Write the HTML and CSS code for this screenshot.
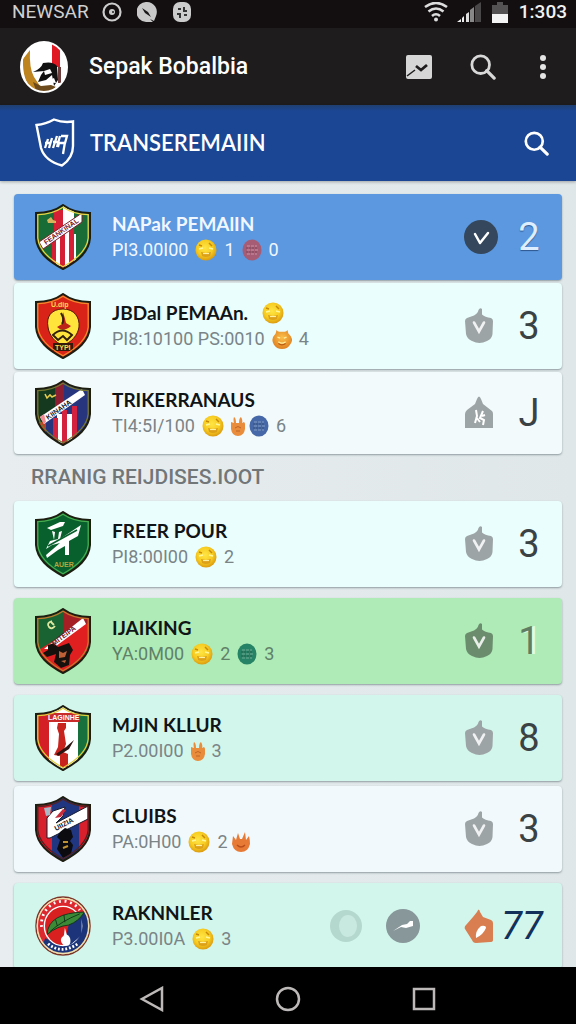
FILE: index.html
```html
<!DOCTYPE html>
<html lang="id">
<head>
<meta charset="utf-8">
<meta name="viewport" content="width=device-width, initial-scale=1">
<title>Sepak Bobalbia</title>
<link rel="stylesheet" href="styles.css">
</head>
<body>
<svg class="sprite" aria-hidden="true">
  <defs>
    <clipPath id="shield-clip"><path d="M28 1C20 7 10 9 1 9V34C2 48 13 57 28 65C43 57 54 48 55 34V9C46 9 36 7 28 1Z"/></clipPath>
    <radialGradient id="gold" cx="45%" cy="40%" r="60%"><stop offset="0" stop-color="#ffe544"/><stop offset=".6" stop-color="#f7cd22"/><stop offset="1" stop-color="#dc9c10"/></radialGradient>
    <radialGradient id="amber" cx="50%" cy="40%" r="60%"><stop offset="0" stop-color="#fbc04a"/><stop offset="1" stop-color="#e08122"/></radialGradient>
  </defs>
  <symbol id="shield-rim" viewBox="0 0 56 66">
    <path d="M28 1C20 7 10 9 1 9V34C2 48 13 57 28 65C43 57 54 48 55 34V9C46 9 36 7 28 1Z" fill="none" stroke="#1d1d10" stroke-width="2"/>
    <path d="M28 3.200C20 8.500 11 10.500 2.800 10.600V34C4 46.500 14 55 28 62.800C42 55 52 46.500 53.200 34V10.600C45 10.500 36 8.500 28 3.200Z" fill="none" stroke="currentColor" stroke-width="1.300"/>
  </symbol>
  <symbol id="smile" viewBox="0 0 22 22">
    <circle cx="11" cy="11" r="10.500" fill="url(#gold)"/>
    <path d="M4 6l3 1M14 4l3 3" stroke="#c98a0a" stroke-width="1.500"/>
    <path d="M4 10l4-1M14 9l4 1" stroke="#fff79b" stroke-width="1.500" fill="none"/>
    <path d="M6 13l5 1 5-1-1 4q-4 2-8 0Z" fill="#dda019"/><path d="M8 14.500h6" stroke="#fff0a0" stroke-width="1.200"/>
  </symbol>
  <symbol id="imp" viewBox="0 0 22 22">
    <path d="M5 1q1 2 3 2h6q2 0 3-2l1 4q7 6 2 12-3 5-9 5t-9-5Q-2 11 4 5Z" fill="url(#amber)"/>
    <path d="M6 9l3 1M13 10l3-1M7 14q4 3 8 0" stroke="#fff0a0" stroke-width="1.500" fill="none"/>
    <path d="M7 16q4 3 8 0" stroke="#b85c15" stroke-width="1.200" fill="none"/>
  </symbol>
  <symbol id="hand" viewBox="0 0 14 20">
    <path d="M3 1q2 1 2 6h3Q8 2 10 1q2 3 1 6l2-1q2 2 1 7-1 7-7 7T0 13V6l3 1Q2 3 3 1Z" fill="#e98d3c"/>
    <path d="M4 12q3-3 6 0M5 15h4" stroke="#bd6425" stroke-width="1" fill="none"/>
  </symbol>
  <symbol id="flame" viewBox="0 0 18 20">
    <path d="M1 4l3 4 2-7 2 6h2l3-7 1 8 3-4q1 4 1 8-2 8-9 8T0 12Z" fill="#e77b35"/>
    <path d="M5 13q4 4 8 0" stroke="#b94e1b" stroke-width="1.500" fill="none"/>
  </symbol>
  <symbol id="coin" viewBox="0 0 20 22">
    <ellipse cx="10" cy="11" rx="9.500" ry="10.500" fill="currentColor"/>
    <path d="M5 7h10M5 11h11M5 15h10" stroke="#fff" stroke-opacity=".35" stroke-width="1.200" stroke-dasharray="3 1"/>
    <path d="M4 9h12M4 13h12" stroke="#222" stroke-opacity=".35" stroke-width="1.200" stroke-dasharray="2 1"/>
  </symbol>
  <symbol id="pouch" viewBox="0 0 30 36">
    <path d="M1 13Q1 11 3 10L10 7.500Q14 5 14.500 2 16-1 18 1V6.500Q21 9 27 10 29 11 29 13L28.500 26Q28 31 23 33 19 35 15.500 35 12 35 8 33 3 31 2 26Z" fill="currentColor"/>
    <path d="M10 14.500l5 9 5-9" fill="none" stroke="#fff" stroke-opacity=".85" stroke-width="2.600" stroke-linecap="round"/>
  </symbol>
  <symbol id="lens" viewBox="0 0 28 28">
    <circle cx="11.500" cy="11.500" r="9.500" fill="none" stroke="currentColor" stroke-width="3"/>
    <path d="M18 18l8 8" stroke="currentColor" stroke-width="3.500" stroke-linecap="round"/>
  </symbol>
</svg>

<div class="screen">
  <div class="status">
    <span class="carrier">NEWSAR</span>
    <svg class="status-icon" viewBox="0 0 20 20"><circle cx="10" cy="10" r="8.500" fill="none" stroke="#ccc" stroke-width="2.200"/><circle cx="10" cy="10" r="3" fill="#ccc"/><circle cx="11" cy="10" r="1" fill="#222"/></svg>
    <svg class="status-icon" viewBox="0 0 20 20"><path d="M10 0a10 10 0 0 1 9 14l-2 5-4-2 3 3H9A10 10 0 0 1 10 0Z" fill="#c9c9c9"/><path d="M5 6l6 4 3 5-6-4Z" fill="#1a1718"/></svg>
    <svg class="status-icon" viewBox="0 0 20 20"><rect x="1" width="18" height="20" rx="7" fill="#ccc"/><path d="M6 7h3M12 5v4h3M5 12h3v4M12 13h3" stroke="#333" stroke-width="2" fill="none"/></svg>
    <svg class="wifi" viewBox="0 0 24 20"><g fill="none" stroke="#ddd" stroke-width="2.600"><path d="M1 5q11-8 22 0M4.500 9.500q7.500-6 15 0M8 14q4-3.500 8 0"/></g><circle cx="12" cy="17.500" r="2" fill="#ddd"/></svg>
    <svg class="signal" viewBox="0 0 24 20"><path d="M0 20l4-3v3ZM5 16l2-2v6H5Z" fill="#eee"/><path d="M9 12l3-2v10H9Z" fill="#ddd"/><path d="M13 8l4-3v15h-4Z" fill="#888"/><path d="M18 4l6-4v20h-6Z" fill="#4a4748"/></svg>
    <svg class="battery" viewBox="0 0 16 21"><path d="M0 3h5V0h6v3h5v10H0Z" fill="#555253"/><path d="M0 12h16v9H0Z" fill="#f4f4f4"/></svg>
    <span class="clock">1:303</span>
  </div>

  <header class="appbar">
    <svg class="avatar" viewBox="0 0 48 52">
      <defs><clipPath id="avatar-clip"><ellipse cx="24" cy="26" rx="23" ry="25"/></clipPath></defs>
      <g clip-path="url(#avatar-clip)"><path fill="#fff" d="M0 0h48v52H0z"/><path d="M3 18L10 9q-1 18 4 27l8 12-8 3Q2 40 3 18Z" fill="#bd8420"/><path d="M32 0h8v26h-8z" fill="#df1824"/><path d="M38 26h3v16h-3z" fill="#6b3d3c"/><path d="M13 31q8-3 10-9 10-2 14 3l1 14-4 6-2-11-6 5-8 2 3-7 3-4Z" fill="#111"/><path d="M13 41l8 4 10-1 5 2-8 6-12-3Z" fill="#6d4a1b"/><path d="M24 30l6-2 2 4-7 2ZM25 41l9-4 2 5Z" fill="#fff"/></g>
      <ellipse cx="24" cy="26" rx="23" ry="25" fill="none" stroke="#fff" stroke-width="2"/>
    </svg>
    <h1 class="app-title">Sepak Bobalbia</h1>
    <button class="bar-button" aria-label="Statistik"><svg class="icon-chart" viewBox="0 0 26 24"><rect width="26" height="24" rx="2" fill="#d6d6d6"/><path d="M1 21l8-6" stroke="#1e1c1c" stroke-width="1.500"/><path d="M10 11l5 4 6-5" fill="none" stroke="#1e1c1c" stroke-width="2.800"/></svg></button>
    <button class="bar-button light" aria-label="Cari"><svg class="icon-lens"><use href="#lens"/></svg></button>
    <button class="bar-button more" aria-label="Menu"><svg class="icon-more" viewBox="0 0 8 26"><g fill="#e4e4e4"><circle cx="4" cy="4" r="3"/><circle cx="4" cy="13" r="3"/><circle cx="4" cy="22" r="3"/></g></svg></button>
  </header>

  <div class="subbar">
    <svg class="subbar-logo" viewBox="0 0 40 50"><path d="M1.500 7Q11 6 19 1.500 28 5 38 3.500V28q0 12-11 19.500Q10 43 6 30Z" fill="none" stroke="#fff" stroke-width="2.400"/><g fill="none" stroke="#fff" stroke-width="2.300"><path d="M13 21l-3 9M17 20l-3 10M10 25h6M22 18l-4 12M18 24h6M25 18l-3 11M26 18h6l-2 7h-6l-1 4M30 24l-2 12"/></g></svg>
    <h2 class="subbar-title">TRANSEREMAIIN</h2>
    <button class="bar-button white" aria-label="Cari pemain"><svg class="icon-lens-small"><use href="#lens"/></svg></button>
  </div>

  <main class="content">
    <section class="group">
      <article class="card blue">
        <svg class="crest" viewBox="0 0 56 66"><g clip-path="url(#shield-clip)"><path fill="#196c35" d="M0 0h56v66H0z"/><path fill="#fff" d="M17 30h24v36H17zM28 0h11v30H28z"/><path fill="#d51f35" d="M19 6h9v24h-9zM17 36h4v30h-4zM25 26h5v40h-5zM34 20h5v40h-5z"/><path d="M4 38L47 9v9L8 45Z" fill="#fff" stroke="#7f202a"/><path d="M12 16l4-3 2 3 3 1v2h-8Z" fill="#d9b35c"/></g><text class="crest-text dark-red" transform="translate(11 41) rotate(-35)">FEANKINAL</text><use href="#shield-rim" color="#e8d645"/></svg>
        <div class="info"><h3 class="name">NAPak PEMAlIN</h3><p class="meta"><span>PI3.00I00</span><svg class="smile"><use href="#smile"/></svg><span>1</span><svg class="coin red"><use href="#coin"/></svg><span>0</span></p></div>
        <button class="badge" aria-label="Terpilih"><svg class="badge-round" viewBox="0 0 34 34"><circle cx="17" cy="17" r="17" fill="#34475c"/><path d="M11 14l5 9M16 23l8-10" fill="none" stroke="#fff" stroke-width="2.500" stroke-linecap="round"/></svg></button>
        <strong class="count pale">2</strong>
      </article>
      <article class="card aqua">
        <svg class="crest" viewBox="0 0 56 66"><g clip-path="url(#shield-clip)"><path fill="#d92318" d="M0 0h56v66H0z"/><path d="M28 16c-12 0-17 8-15 18 1 8 7 16 15 18 8-2 15-10 16-18 1-10-5-18-16-18Z" fill="#ffe53b" stroke="#59170c"/><path d="M28 19l-1 12-5 3q6 6 14-1l-5-3q-1-5-3-11Z" fill="#bd2518"/><path d="M26 20q4 7 1 11M18 42q9-9 19 0l-5 5-4-4-5 4Z" fill="none" stroke="#322011" stroke-width="2"/><path d="M18 50h20v8H18z" fill="#32190c"/></g><text class="crest-text yellow" x="16" y="14">U.dip</text><text class="crest-text yellow" x="20" y="57">TYPI</text><use href="#shield-rim" color="#f08a2b"/></svg>
        <div class="info"><h3 class="name dark">JBDal PEMAAn. <svg class="smile"><use href="#smile"/></svg></h3><p class="meta"><span>PI8:10100 PS:0010</span><svg class="imp"><use href="#imp"/></svg><span class="tally">4</span></p></div>
        <button class="badge" aria-label="Pilih"><svg class="badge-icon"><use href="#pouch"/></svg></button>
        <strong class="count">3</strong>
      </article>
      <article class="card frost compact">
        <svg class="crest" viewBox="0 0 56 66"><g clip-path="url(#shield-clip)"><path fill="#15391f" d="M0 0h56v66H0z"/><path fill="#8d1d31" d="M20 0h9v28h-9z"/><path fill="#27357f" d="M29 0h27v66H0V42h9l20-15Z"/><path fill="#c03e26" d="M0 42h11v24H0z"/><path fill="#fff" d="M22 34h18v32H22z"/><path fill="#d4213e" d="M18 38h5v28h-5zM27 30h5v36h-5zM37 26h5v34h-5z"/><path d="M5 37L47 9l3 6-41 29Z" fill="#fff"/><path d="M5 37l4-3 2 8-2 2Z" fill="#f28b94"/><path d="M10 14l2 4 3-3 2 2 4-2" fill="none" stroke="#e4c950" stroke-width="1.600"/></g><text class="crest-text black" transform="translate(13 40) rotate(-35)">KIINAHA</text><use href="#shield-rim" color="#77762f"/></svg>
        <div class="info"><h3 class="name dark">TRIKERRANAUS</h3><p class="meta"><span>TI4:5I/100</span><svg class="smile"><use href="#smile"/></svg><span class="pair"><svg class="hand"><use href="#hand"/></svg><svg class="coin navy"><use href="#coin"/></svg></span><span>6</span></p></div>
        <button class="badge" aria-label="Pilih"><svg class="badge-icon" viewBox="0 0 30 36"><path d="M13 4q2-5 4 0l2 5 9 7q1 1 1 3v14H1V19q0-2 2-4l8-6Z" fill="currentColor"/><path d="M12 15l1 6-2 7M12 22l4 5M19 16l-3 7 4 2-1 5M18 21l3-1" fill="none" stroke="#fff" stroke-width="2"/></svg></button>
        <strong class="count">J</strong>
      </article>
    </section>

    <h2 class="section-title">RRANIG REIJDISES.IOOT</h2>

    <section class="group loose">
      <article class="card aqua">
        <svg class="crest" viewBox="0 0 56 66"><g clip-path="url(#shield-clip)"><path fill="#08602d" d="M0 0h56v66H0z"/><path d="M12 17l13-6h5l-2 4-12 4ZM17 20l3 1-1 8 4-1 1-7 3-1-2 8 21-14-3 11-9 5v14h-4V35l-7 4-11 8-1-3 14-12-8 2-6 4 4-8 4-1Z" fill="#fff"/><path d="M13 35l29-16" stroke="#08602d" stroke-width="1.500"/></g><text class="crest-text gold" x="19" y="56">AUER</text><use href="#shield-rim" color="#46ad50"/></svg>
        <div class="info"><h3 class="name dark">FREER POUR</h3><p class="meta"><span>PI8:00I00</span><svg class="smile"><use href="#smile"/></svg><span>2</span></p></div>
        <button class="badge" aria-label="Pilih"><svg class="badge-icon"><use href="#pouch"/></svg></button>
        <strong class="count">3</strong>
      </article>
      <article class="card green">
        <svg class="crest" viewBox="0 0 56 66"><g clip-path="url(#shield-clip)"><path fill="#df1f20" d="M0 0h56v66H0z"/><path fill="#196332" d="M0 0h28v27L0 44z"/><path fill="#a51e23" d="M28 0h28v14L28 26z"/><path d="M9 41L48 10l3 6-34 25Z" fill="#fff"/><path d="M17 13q-6 2-3 6 3 3 6-1M16 14l3 3" fill="none" stroke="#dce8a1" stroke-width="1.800"/><path d="M13 37l6-2 4 4 11-4 4 7-3 5-1 10-8 3-7-6 2-8-9 3-4-4 5-3Z" fill="#17110e"/><path d="M24 43l4 2 4-2-2 6-6 1ZM26 53l5-1-1 3Z" fill="#bd6038"/></g><text class="crest-text dark-red" transform="translate(19 38) rotate(-37)">MITEIPA</text><use href="#shield-rim" color="#c07a2c"/></svg>
        <div class="info"><h3 class="name dark">IJAIKING</h3><p class="meta"><span>YA:0M00</span><svg class="smile"><use href="#smile"/></svg><span>2</span><svg class="coin teal"><use href="#coin"/></svg><span>3</span></p></div>
        <button class="badge moss" aria-label="Pilih"><svg class="badge-icon"><use href="#pouch"/></svg></button>
        <strong class="count shaded">1</strong>
      </article>
      <div class="group snug">
        <article class="card mint">
          <svg class="crest" viewBox="0 0 56 66"><g clip-path="url(#shield-clip)"><path fill="#fff" d="M0 0h56v66H0z"/><path fill="#d51f26" d="M0 0h14v66H0z"/><path fill="#18703c" d="M43 0h13v66H43z"/><path fill="#c92b2b" d="M12 8h32v9H12z"/><path d="M23 18h8v5l-2 3 2 13-3 8 5 2v13h-8V51l-6-1 4-8 1-13-2-6Z" fill="#c8231d"/><path d="M21 49l10-7 8-7-5 9-11 7Z" fill="#2d1410"/></g><text class="crest-text white" x="13" y="15">LAGINHE</text><use href="#shield-rim" color="#e0cf3c"/></svg>
          <div class="info"><h3 class="name dark">MJIN KLLUR</h3><p class="meta"><span>P2.00I00</span><svg class="hand"><use href="#hand"/></svg><span class="tally">3</span></p></div>
          <button class="badge" aria-label="Pilih"><svg class="badge-icon"><use href="#pouch"/></svg></button>
          <strong class="count">8</strong>
        </article>
        <article class="card ice">
          <svg class="crest" viewBox="0 0 56 66"><g clip-path="url(#shield-clip)"><path fill="#d81f2c" d="M0 0h56v66H0z"/><path fill="#213681" d="M17 0h27v66H17z"/><path d="M12 42V22l6-7 12-4-2 9-7 7 32-17v13L15 42Z" fill="#fff" stroke="#171d2b"/><path d="M20 22l8-9 3 1-5 7Z" fill="#c62b3c"/><path d="M9 12l7-1-1 8-4 1Z" fill="#a9bac6"/><path d="M25 36l5-4 6 2 2 7-3 4 3 4-2 9-8 4-6-9 3-9-3-3Z" fill="#0c0c10"/><path d="M28 46h5M28 52l5-2" stroke="#c09231" stroke-width="2"/></g><text class="crest-text black" transform="translate(21 35) rotate(-28)">UIIZIA</text><use href="#shield-rim" color="#512021"/></svg>
          <div class="info"><h3 class="name dark">CLUIBS</h3><p class="meta"><span>PA:0H00</span><svg class="smile"><use href="#smile"/></svg><span class="pair"><span>2</span><svg class="flame"><use href="#flame"/></svg></span></p></div>
          <button class="badge" aria-label="Pilih"><svg class="badge-icon"><use href="#pouch"/></svg></button>
          <strong class="count">3</strong>
        </article>
      </div>
      <article class="card mint">
        <svg class="crest" viewBox="0 0 60 64"><defs><clipPath id="round-clip"><ellipse cx="30" cy="32" rx="28" ry="30"/></clipPath></defs><g clip-path="url(#round-clip)"><path fill="#dc2930" d="M0 0h60v64H0z"/><path d="M47 20l13-5v49H3l8-19 19 8 16-8Z" fill="#1b347a"/></g><ellipse cx="30" cy="32" rx="20" ry="21" fill="#d92020" stroke="#fff" stroke-width="1.500"/><path d="M36 31l14-13v24L38 52h-7Z" fill="#1b347a"/><path d="M13 41q1-23 40-24-6 10-17 14-12 1-23 10Z" fill="#3b8b36" stroke="#14351b"/><path d="M16 38Q28 27 48 19M24 32l-2-7M32 28l-1-8" stroke="#14351b" fill="none"/><path d="M32 34l-1 8q-6 5-1 10 8 3 8-4 0-5-4-7Z" fill="#fff"/><path d="M7 33A23 25 0 0 1 48 15" fill="none" stroke="#fff" stroke-width="3" stroke-dasharray="2 4"/><path d="M14 51Q28 63 46 51" fill="none" stroke="#fff" stroke-width="3" stroke-dasharray="2 2"/><ellipse cx="30" cy="32" rx="29" ry="31" fill="none" stroke="#7b3426" stroke-width="1.500"/><ellipse cx="30" cy="32" rx="27.500" ry="29.500" fill="none" stroke="#f2dfab" stroke-width="1.500"/></svg>
        <div class="info"><h3 class="name dark">RAKNNLER</h3><p class="meta"><span>P3.00I0A</span><svg class="smile"><use href="#smile"/></svg><span>3</span></p></div>
        <div class="extras">
          <svg class="badge-round" viewBox="0 0 34 34"><circle cx="17" cy="17" r="16" fill="#b5d8ce"/><ellipse cx="19" cy="17" rx="9" ry="11" fill="#c8e9df"/></svg>
          <svg class="badge-round" viewBox="0 0 34 34"><circle cx="17" cy="17" r="17" fill="#87979a"/><path d="M7 22l9-6 5-1 3-3h3v5l-7 2-5-1Z" fill="#fff"/></svg>
        </div>
        <button class="badge" aria-label="Pilih"><svg class="badge-icon" viewBox="0 0 30 36"><path d="M13 4q2-5 3 0l3 5 8 3q2 1 2 3v17q0 2-3 2l-14 1q-3 0-4-3L1 21q-1-2 1-4l7-8Z" fill="#d97e50"/><path d="M12 30q-1-7 5-12 5-1 5 2-3 7-10 10Z" fill="#fff"/></svg></button>
        <strong class="count double">77</strong>
      </article>
    </section>
  </main>

  <nav class="navbar">
    <button class="nav-button" aria-label="Kembali"><svg class="nav-icon" viewBox="0 0 26 26"><path d="M23 2v22L3 13Z" fill="none" stroke="#bdb9b8" stroke-width="2.500"/></svg></button>
    <button class="nav-button" aria-label="Beranda"><svg class="nav-icon" viewBox="0 0 26 26"><circle cx="13" cy="13" r="11" fill="none" stroke="#bdb9b8" stroke-width="2.500"/></svg></button>
    <button class="nav-button" aria-label="Aplikasi terbaru"><svg class="nav-icon" viewBox="0 0 26 26"><rect x="3" y="3" width="20" height="20" fill="none" stroke="#bdb9b8" stroke-width="2.500"/></svg></button>
  </nav>
</div>
</body>
</html>
```

FILE: styles.css
```css
* { box-sizing: border-box; }
body, h1, h2, h3, p { margin: 0; }
body { font-family: Roboto, "Liberation Sans", sans-serif; background: #e4eaec; }
button { border: 0; padding: 0; background: none; color: inherit; font: inherit; cursor: pointer; }
svg { display: block; flex: none; }
.sprite { position: absolute; width: 0; height: 0; }

.screen { display: flex; flex-direction: column; height: 100vh; }

.status { display: flex; align-items: center; flex: none; height: 28px; padding: 0 9px 4px 12px; background: #130f11; color: #d0d0d0; }
.carrier { margin-right: 13px; font-size: 19px; line-height: 24px; }
.status-icon { width: 20px; height: 20px; margin-right: 15px; }
.wifi { width: 24px; height: 20px; margin-left: auto; }
.signal { width: 24px; height: 20px; margin-left: 9px; }
.battery { width: 16px; height: 21px; margin-left: 11px; }
.clock { margin-left: 11px; font-size: 19px; line-height: 24px; font-weight: 500; color: #f2f2f2; }

.appbar { display: flex; align-items: center; flex: none; height: 77px; padding: 0 22px 0 20px; background: #1e1c1c; }
.avatar { width: 48px; height: 52px; }
.app-title { flex: 1; margin-left: 21px; color: #fff; font-size: 23px; line-height: 32px; font-weight: 500; }
.bar-button { display: grid; place-items: center; width: 40px; height: 48px; margin-left: 24px; }
.bar-button.light { color: #d8d8d8; }
.bar-button.white { color: #fff; }
.bar-button.more { width: 22px; margin-left: 29px; }
.icon-chart { width: 26px; height: 24px; }
.icon-lens { width: 26px; height: 26px; }
.icon-lens-small { width: 25px; height: 25px; }
.icon-more { width: 8px; height: 26px; }

.subbar { position: relative; display: flex; align-items: center; flex: none; height: 76px; padding: 0 20px 0 35px; background: linear-gradient(#203e70, #1b4693 6px); box-shadow: 0 1px 3px rgba(0, 0, 0, .3); }
.subbar-logo { width: 40px; height: 50px; }
.subbar-title { flex: 1; margin-left: 15px; color: #fff; font-size: 22px; line-height: 32px; font-weight: 600; font-family: Lato, sans-serif; }

.content { flex: 1; min-height: 0; overflow-y: auto; scrollbar-width: none; padding: 13px 14px 0; background: linear-gradient(90deg, #e8eeef, #e0e7e9); }
.group { display: flex; flex-direction: column; gap: 3px; }
.group.loose { gap: 11px; }
.group.snug { gap: 5px; }
.section-title { padding-left: 17px; color: #717679; font-size: 21px; line-height: 47px; font-weight: 500; }

.card { display: flex; align-items: center; height: 86px; padding: 0 16px 0 21px; border-radius: 4px; box-shadow: 0 1px 2px rgba(40, 60, 70, .45); color: #7a8487; }
.card.compact { height: 82px; }
.card.blue { background: #5b98e0; color: #f1f7ff; }
.card.aqua { background: #eafefd; }
.card.frost { background: #f3fafb; }
.card.green { background: #afebb7; color: #618068; }
.card.mint { background: #d3f6ec; }
.card.ice { background: #f2f9fc; }

.crest { width: 56px; height: 66px; }
.crest-text { font-family: "Liberation Sans", sans-serif; font-size: 7px; font-weight: 700; }
.dark-red { fill: #7a151d; }
.yellow { fill: #ffd94a; }
.black { fill: #14161d; }
.gold { fill: #b5a53c; }
.white { fill: #fff; }

.info { flex: 1; min-width: 0; margin-left: 21px; white-space: nowrap; }
.name { display: flex; align-items: center; gap: 14px; font-family: Lato, "Liberation Sans", sans-serif; font-size: 19px; line-height: 26px; font-weight: 700; }
.name.dark { color: #101416; }
.meta { display: flex; align-items: center; gap: 7px; height: 26px; font-size: 18px; line-height: 26px; }
.pair { display: flex; align-items: center; gap: 4px; }
.smile { width: 22px; height: 22px; }
.imp { width: 20px; height: 22px; }
.hand { width: 14px; height: 20px; }
.flame { width: 18px; height: 20px; }
.coin { width: 20px; height: 22px; }
.coin.red { color: #a65c74; }
.coin.navy { color: #4668a8; }
.coin.teal { color: #278365; }

.badge { display: grid; place-items: center; width: 30px; height: 48px; color: #9da4a6; }
.badge.moss { color: #6b8d6d; }
.badge-icon { width: 30px; height: 36px; }
.badge-round { width: 34px; height: 34px; }
.extras { display: flex; gap: 23px; margin-right: 44px; }
.count { width: 34px; margin-left: 18px; text-align: center; color: #3b4244; font-size: 38px; line-height: 48px; font-weight: 400; }
.count.pale { color: #dceeff; text-shadow: 0 1px 1px #2d568d; }
.count.shaded { color: #5f7d63; text-shadow: 3px 0 0 #e2fce4; }
.count.double { width: 48px; margin-left: 4px; color: #12305a; font-style: italic; }

.navbar { display: flex; align-items: center; justify-content: center; gap: 88px; flex: none; height: 57px; padding-top: 7px; background: #000; }
.nav-button { display: grid; place-items: center; width: 48px; height: 48px; }
.nav-icon { width: 26px; height: 26px; }
```
